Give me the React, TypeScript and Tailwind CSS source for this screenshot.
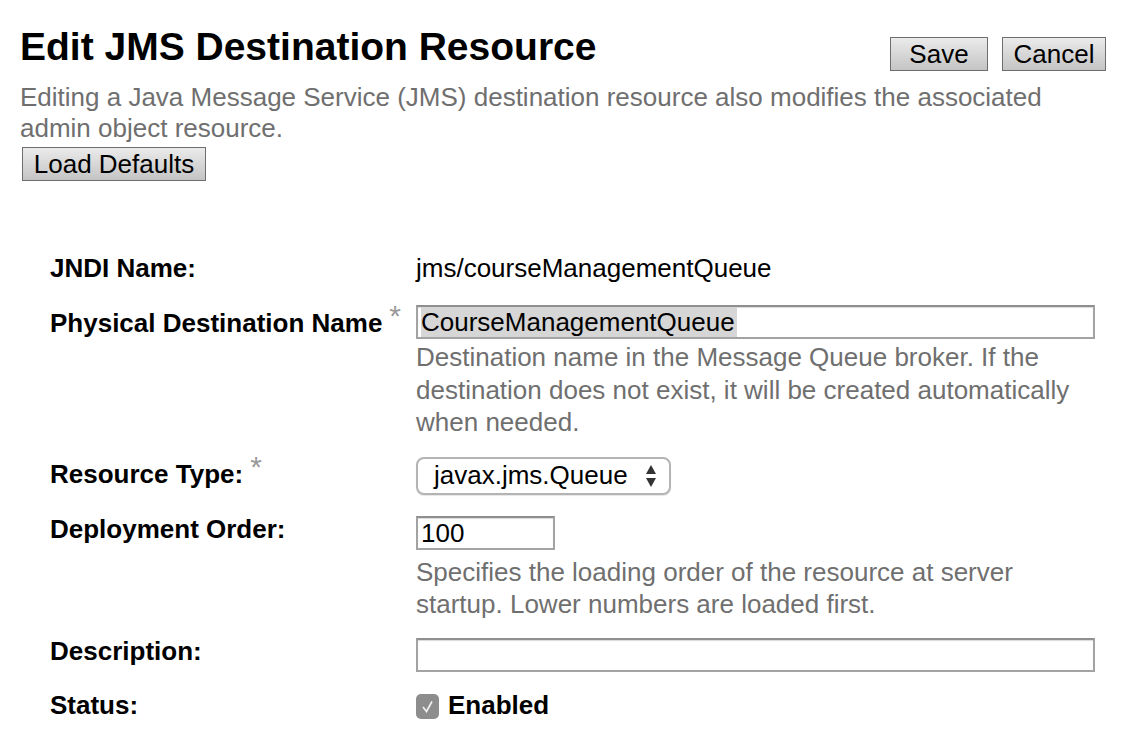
import { ReactNode } from "react";

const FONT = { fontFamily: '"Liberation Sans", Arial, Helvetica, sans-serif' };

function GrayButton({ children, className = "" }: { children: ReactNode; className?: string }) {
  return (
    <button
      type="button"
      className={`h-[34px] border border-[#6e6e6e] bg-gradient-to-b from-[#ebebeb] to-[#c4c4c4] text-[26px] leading-none text-black ${className}`}
    >
      {children}
    </button>
  );
}

function Label({ children, required, className = "" }: { children: ReactNode; required?: boolean; className?: string }) {
  return (
    <div className={`w-[366px] shrink-0 text-[26px] font-bold leading-[34px] text-black ${className}`}>
      {children}
      {required && <span className="relative -top-[6px] ml-[7px] text-[30px] font-normal text-[#9a9a9a]">*</span>}
    </div>
  );
}

function Help({ children, className = "" }: { children: ReactNode; className?: string }) {
  return <p className={`text-[26px] leading-[32.5px] text-[#6f6f6f] ${className}`}>{children}</p>;
}

function FakeInput({ className = "", children }: { className?: string; children?: ReactNode }) {
  return (
    <div
      className={`h-[34px] border-2 border-[#a3a3a3] border-t-[#8f8f8f] bg-white pl-[3px] text-[26px] leading-[30px] text-black shadow-[inset_0_1px_1px_rgba(0,0,0,0.15)] ${className}`}
    >
      {children}
    </div>
  );
}

export default function App() {
  return (
    <div className="min-h-screen bg-white px-5 text-black" style={FONT}>
      <div className="flex items-start justify-between pt-[24px]">
        <h1 className="text-[39px] font-bold leading-[46px]">Edit JMS Destination Resource</h1>
        <div className="mt-[13px] flex gap-[14px]">
          <GrayButton className="w-[98px]">Save</GrayButton>
          <GrayButton className="w-[104px]">Cancel</GrayButton>
        </div>
      </div>

      <p className="mt-[11px] text-[26px] leading-[31px] text-[#6f6f6f]">
        Editing a Java Message Service (JMS) destination resource also modifies the associated admin object resource.
      </p>
      <GrayButton className="ml-[2px] mt-[3px] w-[184px]">Load Defaults</GrayButton>

      <div className="mt-[70px] pl-[30px]">
        <div className="flex">
          <Label>JNDI Name:</Label>
          <div className="text-[26px] leading-[34px]">jms/courseManagementQueue</div>
        </div>

        <div className="mt-[20px] flex">
          <Label required>Physical Destination Name</Label>
          <div className="w-[679px]">
            <FakeInput>
              <span className="bg-[#d6d6d6] pr-[2px]">CourseManagementQueue</span>
            </FakeInput>
            <Help className="mt-[2px]">
              Destination name in the Message Queue broker. If the destination does not exist, it will be created
              automatically when needed.
            </Help>
          </div>
        </div>

        <div className="mt-[18px] flex">
          <Label required className="-mt-[1px]">Resource Type:</Label>
          <div className="flex h-[38px] w-[255px] items-center justify-between rounded-[8px] border-2 border-[#b4b4b4] bg-white pl-[16px] pr-[12px] text-[26px] shadow-[0_1px_1px_rgba(0,0,0,0.1)]">
            <span>javax.jms.Queue</span>
            <svg width="12" height="24" viewBox="0 0 12 24" fill="#333">
              <path d="M6 1 L11 10 H1 Z" />
              <path d="M6 23 L11 14 H1 Z" />
            </svg>
          </div>
        </div>

        <div className="mt-[21px] flex">
          <Label className="-mt-[4px]">Deployment Order:</Label>
          <div className="w-[679px]">
            <FakeInput className="w-[139px]">100</FakeInput>
            <Help className="mt-[6px]">
              Specifies the loading order of the resource at server
              <br />
              startup. Lower numbers are loaded first.
            </Help>
          </div>
        </div>

        <div className="mt-[17px] flex">
          <Label className="-mt-[4px]">Description:</Label>
          <FakeInput className="w-[679px]" />
        </div>

        <div className="mt-[16px] flex">
          <Label>Status:</Label>
          <div className="flex items-center">
            <div className="mt-[4px] flex h-[25px] w-[23px] items-center justify-center rounded-[5px] bg-[#8d8d8d]">
              <svg width="15" height="15" viewBox="0 0 15 15" fill="none" stroke="#f2f2f2" strokeWidth="1.6">
                <path d="M3 8 L6.5 12.5 L12 2.5" />
              </svg>
            </div>
            <span className="ml-[9px] text-[26px] font-bold leading-[34px]">Enabled</span>
          </div>
        </div>
      </div>
    </div>
  );
}
